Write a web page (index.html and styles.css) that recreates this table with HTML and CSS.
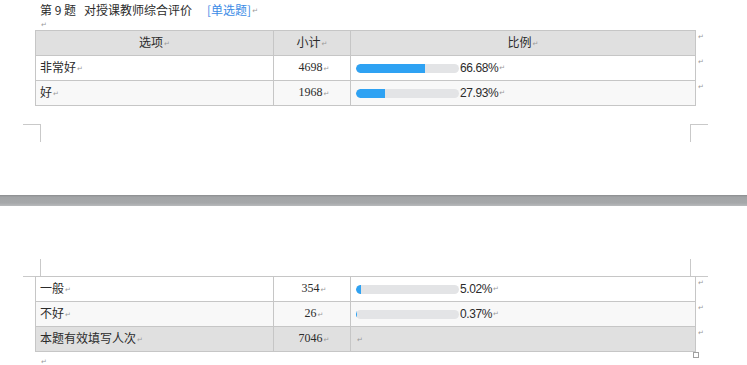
FILE: index.html
```html
<!DOCTYPE html>
<html lang="zh">
<head>
<meta charset="utf-8">
<link rel="stylesheet" href="styles.css">
</head>
<body>
<div class="page page1">
  <div class="title"><span class="qno">第 9 题</span><span class="qtext">对授课教师综合评价</span><span class="qtype">[单选题]</span><span class="pm">↵</span></div>
  <div class="para"><span class="pm">↵</span></div>
  <div class="tablewrap">
    <table class="grid">
      <colgroup><col class="c1"><col class="c2"><col class="c3"></colgroup>
      <tr class="head"><td class="center">选项<span class="pm">↵</span></td><td class="center">小计<span class="pm">↵</span></td><td class="center">比例<span class="pm">↵</span></td></tr>
      <tr><td class="opt">非常好<span class="pm">↵</span></td><td class="num">4698<span class="pm">↵</span></td><td class="pct"><div class="barcell"><span class="bar"><span class="fill" style="width:66.68%"></span></span><span class="pv">66.68%</span><span class="pm">↵</span></div></td></tr>
      <tr class="alt"><td class="opt">好<span class="pm">↵</span></td><td class="num">1968<span class="pm">↵</span></td><td class="pct"><div class="barcell"><span class="bar"><span class="fill" style="width:27.93%"></span></span><span class="pv">27.93%</span><span class="pm">↵</span></div></td></tr>
    </table>
    <div class="marks"><span class="pm">↵</span><span class="pm">↵</span><span class="pm">↵</span></div>
  </div>
  <span class="crop crop-bl"></span>
  <span class="crop crop-br"></span>
</div>
<div class="gap"></div>
<div class="page page2">
  <span class="crop crop-tl"></span>
  <span class="crop crop-tr"></span>
  <div class="tablewrap">
    <table class="grid">
      <colgroup><col class="c1"><col class="c2"><col class="c3"></colgroup>
      <tr><td class="opt">一般<span class="pm">↵</span></td><td class="num">354<span class="pm">↵</span></td><td class="pct"><div class="barcell"><span class="bar"><span class="fill" style="width:5.02%"></span></span><span class="pv">5.02%</span><span class="pm">↵</span></div></td></tr>
      <tr class="alt"><td class="opt">不好<span class="pm">↵</span></td><td class="num">26<span class="pm">↵</span></td><td class="pct"><div class="barcell"><span class="bar"><span class="fill" style="width:0.37%"></span></span><span class="pv">0.37%</span><span class="pm">↵</span></div></td></tr>
      <tr class="head"><td class="opt">本题有效填写人次<span class="pm">↵</span></td><td class="num">7046<span class="pm">↵</span></td><td class="pct"><span class="pm">↵</span></td></tr>
    </table>
    <div class="marks"><span class="pm">↵</span><span class="pm">↵</span><span class="pm">↵</span></div>
    <span class="handle"></span>
  </div>
  <div class="para"><span class="pm">↵</span></div>
</div>
</body>
</html>
```

FILE: styles.css
```css
html, body {
  margin: 0;
  padding: 0;
  background: #ffffff;
}
body {
  width: 747px;
  height: 365px;
  overflow: hidden;
  font-family: "Noto Sans CJK SC", "Noto Sans", sans-serif;
  font-size: 12px;
  color: #2b2b2b;
}
.page {
  position: relative;
  padding-left: 35px;
}
.page1 {
  height: 195px;
}
.title {
  padding: 2px 0 0 5px;
  height: 15px;
  line-height: 15px;
  font-size: 12px;
  white-space: nowrap;
}
.qno {
  margin-right: 8px;
}
.qtext {
  margin-right: 15px;
}
.qtype {
  color: #3b8be6;
}
.para {
  height: 13px;
  line-height: 12px;
  padding-left: 5px;
}
.pm {
  font-family: "DejaVu Sans", sans-serif;
  font-size: 7px;
  color: #9a9a9a;
  margin-left: 1px;
  vertical-align: middle;
}
.tablewrap {
  position: relative;
  display: flex;
  align-items: flex-start;
}
.grid {
  border-collapse: collapse;
  table-layout: fixed;
  width: 660px;
}
.grid .c1 { width: 238px; }
.grid .c2 { width: 77px; }
.grid .c3 { width: 345px; }
.grid td {
  border: 1px solid #c6c6c6;
  height: 25px;
  box-sizing: border-box;
  padding: 0;
  line-height: 20px;
  white-space: nowrap;
  vertical-align: middle;
}
.grid tr { background: #ffffff; }
.grid tr.alt { background: #f8f8f8; }
.grid tr.head { background: #e0e0e0; }
.grid td.center { text-align: center; }
.grid td.opt { padding-left: 4px; }
.grid td.num {
  text-align: center;
  font-family: "Liberation Serif", serif;
  font-size: 12px;
  padding-left: 4px;
}
.grid td.pct { padding-left: 5px; }
.barcell {
  display: flex;
  align-items: center;
}
.bar {
  display: block;
  width: 103px;
  height: 9px;
  border-radius: 5px;
  background: #e3e4e6;
  overflow: hidden;
}
.fill {
  display: block;
  height: 100%;
  background: #2ea2f3;
  border-radius: 5px 0 0 5px;
}
.pv {
  margin-left: 1px;
  font-family: "Liberation Sans", sans-serif;
  font-size: 12px;
  letter-spacing: -0.4px;
  color: #2b2b2b;
}
.marks {
  display: flex;
  flex-direction: column;
  padding-left: 2px;
}
.marks .pm {
  height: 25px;
  line-height: 14px;
  margin: 0;
}
.handle {
  position: absolute;
  left: 658px;
  top: 76px;
  width: 4px;
  height: 4px;
  border: 1px solid #a0a0a0;
  background: #ffffff;
}
.page2 {
  padding-top: 70px;
  height: 89px;
}
.page2 .para {
  padding-top: 2px;
}
.gap {
  height: 11px;
  background: linear-gradient(#8a8c8e 0, #a2a4a6 2px, #a6a8aa 8px, #b8babc 11px);
}
.crop {
  position: absolute;
  display: block;
  width: 17px;
  height: 17px;
  border-color: #c9c9c9;
  border-style: solid;
  border-width: 0;
}
.crop-bl {
  left: 23px;
  top: 124px;
  border-top-width: 1px;
  border-right-width: 1px;
}
.crop-br {
  left: 690px;
  top: 124px;
  border-top-width: 1px;
  border-left-width: 1px;
}
.crop-tl {
  left: 23px;
  top: 53px;
  border-bottom-width: 1px;
  border-right-width: 1px;
}
.crop-tr {
  left: 690px;
  top: 53px;
  border-bottom-width: 1px;
  border-left-width: 1px;
}
```
